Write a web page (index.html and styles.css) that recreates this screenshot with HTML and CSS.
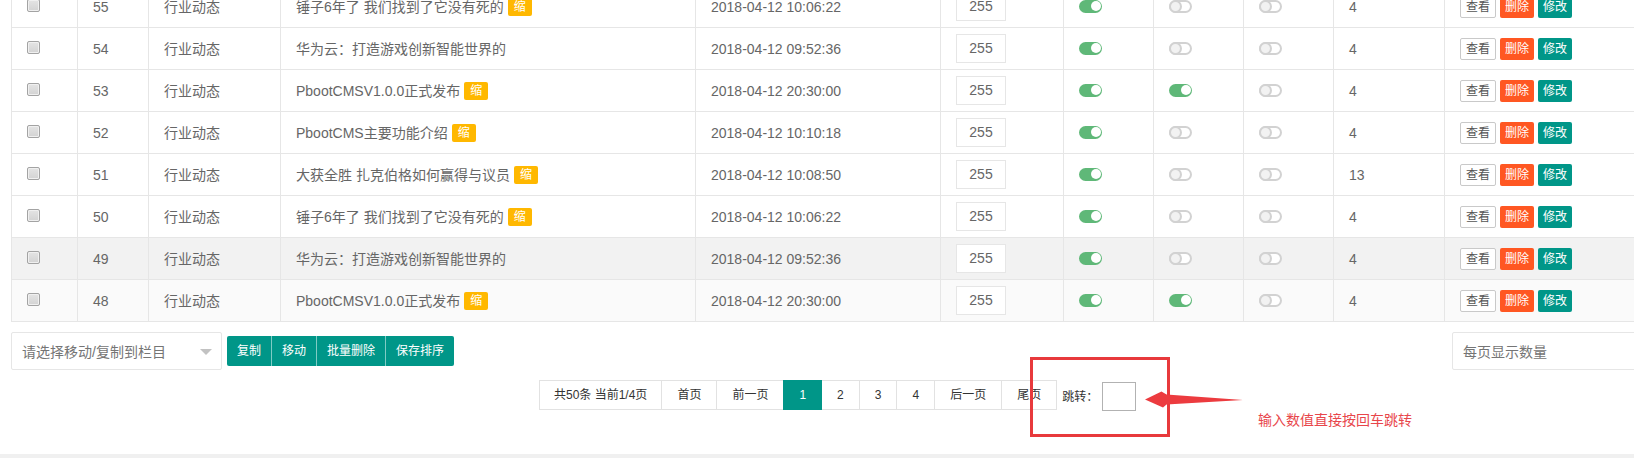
FILE: index.html
```html
<!DOCTYPE html>
<html lang="zh-CN">
<head>
<meta charset="utf-8">
<title>内容列表</title>
<link rel="stylesheet" href="styles.css">
</head>
<body>
<div class="main">
  <div class="tbl">
    <div class="row">
      <div class="cell"><input type="checkbox" class="chk"></div>
      <div class="cell">55</div>
      <div class="cell">行业动态</div>
      <div class="cell">锤子6年了 我们找到了它没有死的<span class="badge">缩</span></div>
      <div class="cell">2018-04-12 10:06:22</div>
      <div class="cell"><input class="sort" value="255"></div>
      <div class="cell"><span class="sw on"></span></div>
      <div class="cell"><span class="sw off"></span></div>
      <div class="cell"><span class="sw off"></span></div>
      <div class="cell">4</div>
      <div class="cell"><span class="xbtn view">查看</span><span class="xbtn del">删除</span><span class="xbtn edit">修改</span></div>
    </div>
    <div class="row">
      <div class="cell"><input type="checkbox" class="chk"></div>
      <div class="cell">54</div>
      <div class="cell">行业动态</div>
      <div class="cell">华为云：打造游戏创新智能世界的</div>
      <div class="cell">2018-04-12 09:52:36</div>
      <div class="cell"><input class="sort" value="255"></div>
      <div class="cell"><span class="sw on"></span></div>
      <div class="cell"><span class="sw off"></span></div>
      <div class="cell"><span class="sw off"></span></div>
      <div class="cell">4</div>
      <div class="cell"><span class="xbtn view">查看</span><span class="xbtn del">删除</span><span class="xbtn edit">修改</span></div>
    </div>
    <div class="row">
      <div class="cell"><input type="checkbox" class="chk"></div>
      <div class="cell">53</div>
      <div class="cell">行业动态</div>
      <div class="cell">PbootCMSV1.0.0正式发布<span class="badge">缩</span></div>
      <div class="cell">2018-04-12 20:30:00</div>
      <div class="cell"><input class="sort" value="255"></div>
      <div class="cell"><span class="sw on"></span></div>
      <div class="cell"><span class="sw on"></span></div>
      <div class="cell"><span class="sw off"></span></div>
      <div class="cell">4</div>
      <div class="cell"><span class="xbtn view">查看</span><span class="xbtn del">删除</span><span class="xbtn edit">修改</span></div>
    </div>
    <div class="row">
      <div class="cell"><input type="checkbox" class="chk"></div>
      <div class="cell">52</div>
      <div class="cell">行业动态</div>
      <div class="cell">PbootCMS主要功能介绍<span class="badge">缩</span></div>
      <div class="cell">2018-04-12 10:10:18</div>
      <div class="cell"><input class="sort" value="255"></div>
      <div class="cell"><span class="sw on"></span></div>
      <div class="cell"><span class="sw off"></span></div>
      <div class="cell"><span class="sw off"></span></div>
      <div class="cell">4</div>
      <div class="cell"><span class="xbtn view">查看</span><span class="xbtn del">删除</span><span class="xbtn edit">修改</span></div>
    </div>
    <div class="row">
      <div class="cell"><input type="checkbox" class="chk"></div>
      <div class="cell">51</div>
      <div class="cell">行业动态</div>
      <div class="cell">大获全胜 扎克伯格如何赢得与议员<span class="badge">缩</span></div>
      <div class="cell">2018-04-12 10:08:50</div>
      <div class="cell"><input class="sort" value="255"></div>
      <div class="cell"><span class="sw on"></span></div>
      <div class="cell"><span class="sw off"></span></div>
      <div class="cell"><span class="sw off"></span></div>
      <div class="cell">13</div>
      <div class="cell"><span class="xbtn view">查看</span><span class="xbtn del">删除</span><span class="xbtn edit">修改</span></div>
    </div>
    <div class="row">
      <div class="cell"><input type="checkbox" class="chk"></div>
      <div class="cell">50</div>
      <div class="cell">行业动态</div>
      <div class="cell">锤子6年了 我们找到了它没有死的<span class="badge">缩</span></div>
      <div class="cell">2018-04-12 10:06:22</div>
      <div class="cell"><input class="sort" value="255"></div>
      <div class="cell"><span class="sw on"></span></div>
      <div class="cell"><span class="sw off"></span></div>
      <div class="cell"><span class="sw off"></span></div>
      <div class="cell">4</div>
      <div class="cell"><span class="xbtn view">查看</span><span class="xbtn del">删除</span><span class="xbtn edit">修改</span></div>
    </div>
    <div class="row hover">
      <div class="cell"><input type="checkbox" class="chk"></div>
      <div class="cell">49</div>
      <div class="cell">行业动态</div>
      <div class="cell">华为云：打造游戏创新智能世界的</div>
      <div class="cell">2018-04-12 09:52:36</div>
      <div class="cell"><input class="sort" value="255"></div>
      <div class="cell"><span class="sw on"></span></div>
      <div class="cell"><span class="sw off"></span></div>
      <div class="cell"><span class="sw off"></span></div>
      <div class="cell">4</div>
      <div class="cell"><span class="xbtn view">查看</span><span class="xbtn del">删除</span><span class="xbtn edit">修改</span></div>
    </div>
    <div class="row light">
      <div class="cell"><input type="checkbox" class="chk"></div>
      <div class="cell">48</div>
      <div class="cell">行业动态</div>
      <div class="cell">PbootCMSV1.0.0正式发布<span class="badge">缩</span></div>
      <div class="cell">2018-04-12 20:30:00</div>
      <div class="cell"><input class="sort" value="255"></div>
      <div class="cell"><span class="sw on"></span></div>
      <div class="cell"><span class="sw on"></span></div>
      <div class="cell"><span class="sw off"></span></div>
      <div class="cell">4</div>
      <div class="cell"><span class="xbtn view">查看</span><span class="xbtn del">删除</span><span class="xbtn edit">修改</span></div>
    </div>
  </div>

  <div class="toolbar">
    <div class="sel">请选择移动/复制到栏目<i class="edge"></i></div>
    <div class="btn-group">
      <span class="gbtn">复制</span><span class="gbtn">移动</span><span class="gbtn">批量删除</span><span class="gbtn">保存排序</span>
    </div>
    <div class="sel per-page">每页显示数量</div>
  </div>

  <div class="pager-row">
    <div class="laypage">
      <span class="pg count">共50条 当前1/4页</span><a class="pg">首页</a><a class="pg">前一页</a><span class="pg curr">1</span><a class="pg">2</a><a class="pg">3</a><a class="pg">4</a><a class="pg">后一页</a><a class="pg">尾页</a>
    </div>
    <span class="jump-label">跳转：</span><input class="jump-input">
  </div>
</div>
<div class="footer-bar"></div>

<div class="annot-box"></div>
<svg class="annot-arrow" width="110" height="28" viewBox="0 0 110 28">
  <path d="M5 13.5 L21.5 5.5 L26.5 8.5 L103 14 L26.5 18.5 L23 21.5 Z" fill="#ec3b3f"/>
</svg>
<div class="annot-text">输入数值直接按回车跳转</div>
</body>
</html>
```

FILE: styles.css
```css
html, body {
  margin: 0;
  padding: 0;
  overflow: hidden;
  background: #fff;
}
body {
  width: 1634px;
  height: 458px;
  font-family: "Liberation Sans", "Noto Sans CJK SC", sans-serif;
  font-size: 14px;
  color: #666;
}
.main {
  padding-left: 11px;
  width: 1700px;
}
.tbl {
  margin-top: -15px;
  border-left: 1px solid #e6e6e6;
  border-top: 1px solid #e6e6e6;
  width: max-content;
}
.row {
  display: grid;
  grid-template-columns: 66px 71px 132px 415px 245px 123px 90px 90px 90px 111px 220px;
  height: 42px;
  background: #fff;
}
.row.hover { background: #f2f2f2; }
.row.light { background: #fafafa; }
.cell {
  box-sizing: border-box;
  border-right: 1px solid #e6e6e6;
  border-bottom: 1px solid #e6e6e6;
  padding: 0 15px;
  display: flex;
  align-items: center;
  white-space: nowrap;
  line-height: 20px;
}
.chk {
  -webkit-appearance: none;
  appearance: none;
  width: 13px;
  height: 13px;
  margin: -3px 0 0 0;
  box-sizing: border-box;
  border: 1px solid #a3a3a3;
  border-radius: 2px;
  background: linear-gradient(#e4e4e4, #d3d3d3);
  box-shadow: inset 0 0 0 1px #f0f0f0;
}
.badge {
  display: inline-block;
  margin-left: 4px;
  height: 18px;
  line-height: 18px;
  padding: 0 6px;
  font-size: 12px;
  color: #fff;
  background: #ffb800;
  border-radius: 2px;
}
.sort {
  box-sizing: border-box;
  width: 50px;
  height: 29px;
  margin: -1px 0 0 0;
  border: 1px solid #e6e6e6;
  background: #fff;
  text-align: center;
  font-family: inherit;
  font-size: 14px;
  color: #666;
  padding: 0;
  outline: none;
}
.sw {
  display: inline-block;
  position: relative;
  width: 23px;
  height: 13px;
  box-sizing: border-box;
  border-radius: 7px;
  margin-top: -1px;
}
.sw.on {
  background: #5fb878;
}
.sw.on::after {
  content: "";
  position: absolute;
  right: 1.5px;
  top: 1.5px;
  width: 10px;
  height: 10px;
  border-radius: 50%;
  background: #fff;
}
.sw.off {
  border: 2px solid #d2d2d2;
  background: #fff;
}
.sw.off::after {
  content: "";
  position: absolute;
  left: -2px;
  top: -2px;
  width: 13px;
  height: 13px;
  box-sizing: border-box;
  border-radius: 50%;
  border: 2px solid #d2d2d2;
  background: #f2f2f2;
}
.xbtn {
  display: inline-block;
  height: 22px;
  line-height: 22px;
  padding: 0 5px;
  font-size: 12px;
  border-radius: 2px;
  margin-right: 4px;
  color: #fff;
  margin-top: 1px;
}
.xbtn.view {
  box-sizing: border-box;
  border: 1px solid #c9c9c9;
  background: #fff;
  color: #555;
  line-height: 20px;
  padding: 0 5px;
}
.xbtn.del { background: #ff5722; }
.xbtn.edit { background: #009688; }

.toolbar {
  margin-top: 10px;
  display: flex;
  align-items: center;
  height: 38px;
  width: 1649px;
}
.sel {
  position: relative;
  box-sizing: border-box;
  width: 211px;
  height: 38px;
  border: 1px solid #e6e6e6;
  border-radius: 2px;
  padding-left: 10px;
  display: flex;
  align-items: center;
  color: #757575;
  font-size: 14px;
  background: #fff;
}
.edge {
  position: absolute;
  right: 9px;
  top: 16px;
  width: 0;
  height: 0;
  border-style: solid;
  border-width: 6px 6px 0 6px;
  border-color: #c2c2c2 transparent transparent transparent;
}
.per-page {
  margin-left: auto;
  width: 208px;
}
.btn-group {
  margin-left: 5px;
  display: flex;
}
.gbtn {
  height: 30px;
  line-height: 30px;
  padding: 0 10px;
  font-size: 12px;
  color: #fff;
  background: #009688;
  border-left: 1px solid rgba(255, 255, 255, 0.5);
}
.gbtn:first-child {
  border-left: none;
  border-radius: 2px 0 0 2px;
}
.gbtn:last-child {
  border-radius: 0 2px 2px 0;
}

.pager-row {
  margin-top: 10px;
  margin-left: 528px;
  display: flex;
  align-items: center;
  height: 30px;
}
.laypage {
  display: flex;
}
.pg {
  position: relative;
  box-sizing: border-box;
  height: 30px;
  line-height: 28px;
  padding: 0 15px;
  border: 1px solid #e2e2e2;
  margin-right: -1px;
  font-size: 12px;
  color: #333;
  background: #fff;
  white-space: nowrap;
}
.pg.count {
  padding: 0 14px;
}
.pg.curr {
  background: #009688;
  border-color: #009688;
  color: #fff;
  z-index: 1;
}
.jump-label {
  margin-left: 6px;
  font-size: 12px;
  color: #333;
}
.jump-input {
  box-sizing: border-box;
  width: 34px;
  height: 29px;
  margin: 2px 0 0 4px;
  border: 1px solid #b2b2b2;
  padding: 0;
  background: #fff;
  outline: none;
}
.footer-bar {
  margin-top: 44px;
  height: 10px;
  background: #f0f0f0;
}
.annot-box {
  position: absolute;
  left: 1030px;
  top: 357px;
  width: 140px;
  height: 80px;
  box-sizing: border-box;
  border: 3px solid #e8393c;
}
.annot-arrow {
  position: absolute;
  left: 1140px;
  top: 386px;
}
.annot-text {
  position: absolute;
  left: 1258px;
  top: 410px;
  font-size: 14px;
  line-height: 20px;
  color: #e8464b;
  white-space: nowrap;
}
```
